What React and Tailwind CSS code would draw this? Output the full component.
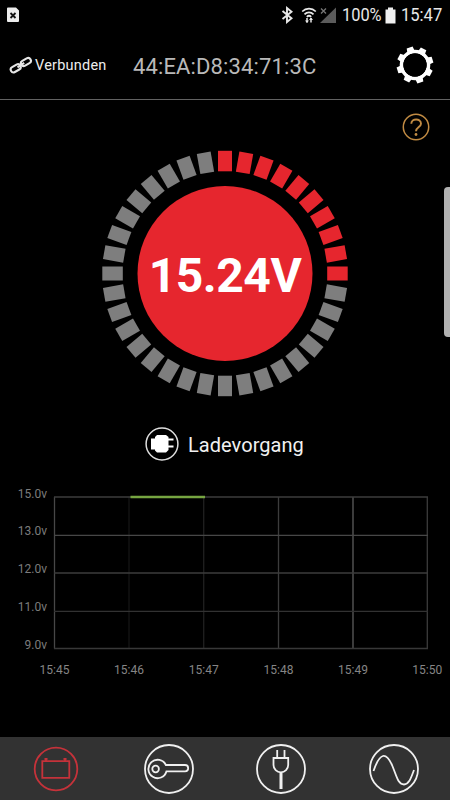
import React, { useState } from 'react'

const SEGMENTS = 36
const ACTIVE_SEGMENTS = 10

const voltLabels = [
  { text: '15.0v', y: 497.5 },
  { text: '13.0v', y: 535.3 },
  { text: '12.0v', y: 573.2 },
  { text: '11.0v', y: 611 },
  { text: '9.0v', y: 648.8 },
]

const rows = [
  { y: 497, color: '#3c3c3c' },
  { y: 535.4, color: '#474747' },
  { y: 573, color: '#3c3c3c' },
  { y: 611.3, color: '#323232' },
  { y: 648.5, color: '#383838' },
]

const columns = [
  { text: '15:45', x: 54.5, color: '#474747' },
  { text: '15:46', x: 129, color: '#151515' },
  { text: '15:47', x: 203.7, color: '#202020' },
  { text: '15:48', x: 278.5, color: '#3c3c3c' },
  { text: '15:49', x: 353, color: '#5c5c5c' },
  { text: '15:50', x: 427.3, color: '#3c3c3c' },
]

const StatusBar = () => (
  <div className="flex h-[30px] shrink-0 items-center text-[#e8e8e8]">
    <svg className="ml-[7px] h-4 w-3" viewBox="0 0 12 16">
      <path d="M1 .5h8l3 3V14a1 1 0 0 1-1 1H1a1 1 0 0 1-1-1V1.500a1 1 0 0 1 1-1z" fill="#ececec" />
      <path d="M3.500 6l5 5m0-5l-5 5" stroke="#111" strokeWidth="1.800" />
    </svg>
    <svg className="ml-[262px] h-[18px] w-[14px]" viewBox="0 0 14 18" fill="none" stroke="currentColor" strokeWidth="1.900">
      <path d="M1.500 5l9 7.300L6 16V2l4.500 3.700L1.500 13" />
    </svg>
    <svg className="ml-[6px] h-[18px] w-[16px]" viewBox="0 0 16 18" fill="none" stroke="currentColor" strokeWidth="1.700">
      <path d="M1.200 5.500a9.700 9.700 0 0 1 13.600 0M3.500 8.300a6.400 6.400 0 0 1 9 0M5.800 10.800a3.200 3.200 0 0 1 4.400 0" />
      <path d="M6 12v4.500M10 12v4.500" strokeWidth="1.500" />
      <path d="M4 14.500h4l-2 2.500zM8 14h4l-2-2.500z" fill="currentColor" stroke="none" />
    </svg>
    <svg className="ml-[3px] h-[18px] w-[17px]" viewBox="0 0 17 18">
      <path d="M16 1.500v15.500H0z" fill="#5b5b5b" />
      <path d="M1 2.500l5 5m0-5l-5 5" stroke="#777" strokeWidth="1.300" />
    </svg>
    <div className="ml-[5px] w-[40px]">
      <span className="inline-block origin-left scale-x-[0.91] text-[18px] leading-[30px]">100%</span>
    </div>
    <svg className="ml-[3px] h-[17px] w-[11px]" viewBox="0 0 11 17" fill="#f0f0f0">
      <path d="M3 .5h5v2h2.500v14H.5v-14H3z" />
    </svg>
    <div className="ml-[5px] w-[42px]">
      <span className="inline-block origin-left scale-x-[0.92] text-[18px] leading-[30px]">15:47</span>
    </div>
  </div>
)

const Header = () => (
  <header className="flex h-[70px] shrink-0 items-center border-b border-[#626262]">
    <svg className="ml-[9px] h-[18px] w-[24px]" viewBox="0 0 24 18" fill="none" stroke="#e6e6e6" strokeWidth="2.100">
      <rect x="-5.300" y="-2.800" width="10.600" height="5.600" rx="2.800" transform="translate(6.700 12.300) rotate(-30)" />
      <rect x="-5.300" y="-2.800" width="10.600" height="5.600" rx="2.800" transform="translate(16.900 6) rotate(-30)" />
      <path d="M8.500 11.300l6.700-4.400" />
    </svg>
    <div className="ml-[2px] w-[98px] pt-[2px] text-[14.500px] tracking-[0.220px] text-[#ededed]">Verbunden</div>
    <div className="w-[263px] pt-[4px] text-[22px] tracking-[0.130px] text-[#b9b9b9]">44:EA:D8:34:71:3C</div>
    <svg className="h-[38px] w-[38px]" viewBox="-19 -19 38 38">
      <g fill="#fff">
        {Array.from({ length: 8 }, (_, i) => (
          <path key={i} d="M-4-12l.9-6.300h6.200l.9 6.300z" transform={`rotate(${i * 45 + 28})`} />
        ))}
      </g>
      <circle r="13.500" fill="none" stroke="#fff" strokeWidth="3.600" />
      <circle r="11.600" fill="#000" />
    </svg>
  </header>
)

const Gauge = () => (
  <div className="grid h-[248px] w-[248px] place-items-center">
    <svg className="col-start-1 row-start-1 h-[248px] w-[248px]" viewBox="-124 -123.500 248 248">
      {Array.from({ length: SEGMENTS }, (_, i) => (
        <rect
          key={i}
          x="-7"
          y="-122.700"
          width="14"
          height="20.500"
          fill={i < ACTIVE_SEGMENTS ? '#e6262e' : '#7e7e7e'}
          transform={`rotate(${i * (360 / SEGMENTS)})`}
        />
      ))}
      <circle r="87.500" fill="#e6262e" />
    </svg>
    <span className="col-start-1 row-start-1 pt-[3px] text-[48px] leading-none font-bold tracking-[-0.450px] text-white">15.24V</span>
  </div>
)

const VoltageChart = () => (
  <svg className="h-[200px] w-[450px] shrink-0" viewBox="0 485 450 200">
    {columns.map((c) => (
      <g key={c.text}>
        <path d={`M${c.x} 497V648.500`} stroke={c.color} strokeWidth="1.300" />
        <text x={c.x} y="674" fontSize="12" fill="#858585" textAnchor="middle">{c.text}</text>
      </g>
    ))}
    {rows.map((r) => (
      <path key={r.y} d={`M54 ${r.y}H428`} stroke={r.color} strokeWidth="1.300" />
    ))}
    {voltLabels.map((l) => (
      <text key={l.text} x="47" y={l.y} fontSize="12" fill="#7c7c7c" textAnchor="end">{l.text}</text>
    ))}
    <path d="M130.500 497H205" stroke="#76a541" strokeWidth="2.600" />
  </svg>
)

const tabs = [
  {
    id: 'battery',
    r: 21.3,
    icon: <path d="M-13.700-7.800h27v16.600h-27zM-11.500-10h3M7.500-10h3M-10-10v2.500M9-10v2.500" />,
  },
  {
    id: 'ignition',
    r: 24,
    icon: (
      <>
        <path d="M-3.100-4H16a3.150 3.150 0 0 1 0 6.300H-2.500A9.200 9.200 0 1 1-3.100-4z" />
        <circle cx="-13.400" cy="0" r="3.300" />
      </>
    ),
  },
  {
    id: 'charging',
    r: 24,
    icon: (
      <>
        <path d="M-3.800-19v8M3.500-19v8M-7.500-11H7.200V-4a7.350 7.350 0 0 1-14.700 0z" />
        <path d="M0 4V20" strokeWidth="3" />
      </>
    ),
  },
  {
    id: 'wave',
    r: 24,
    icon: <path d="M-20.500 2C-14-17-8-17-2-4C3 8 4 15.500 10 15.500C15 15.500 17 9 20 1" />,
  },
]

const App = () => {
  const [active, setActive] = useState('battery')

  return (
    <div className="relative flex h-[800px] w-[450px] flex-col overflow-hidden bg-black font-['Roboto',sans-serif]">
      <StatusBar />
      <Header />

      <div className="flex h-[50px] shrink-0 justify-end pt-[13px] pr-[20px]">
        <svg className="h-7 w-7" viewBox="-14 -14 28 28" fill="none" stroke="#c18b43" strokeWidth="1.500">
          <circle r="12.700" />
          <path d="M-4.700-3.200C-4.700-9 5-9 5-3.300C5 0 0 0 0 4.300" strokeWidth="1.900" />
          <circle cy="7.500" r="1.400" fill="#c18b43" stroke="none" />
        </svg>
      </div>

      <div className="flex h-[248px] shrink-0 justify-center">
        <Gauge />
      </div>

      <div className="mt-[26px] flex h-[40px] shrink-0 items-center pl-[145px]">
        <svg className="h-[34px] w-[34px]" viewBox="-17 -17 34 34">
          <circle r="15.900" fill="none" stroke="#dedede" strokeWidth="1.500" />
          <path d="M-11-5.500h4V-7l2-2H4l2.500 2v1.500H11.500v2H6.500v5H11.500v2H6.500V6L4 8.500h-9L-7 6.500V5.500h-4z" fill="#fff" />
        </svg>
        <span className="ml-[9px] pt-px text-[20px] tracking-[0.050px] text-[#f1f1f1]">Ladevorgang</span>
      </div>

      <div className="mt-[21px]">
        <VoltageChart />
      </div>

      <nav className="mt-auto flex h-[63px] shrink-0 items-center bg-[#323232]">
        {tabs.map((tab) => (
          <button
            key={tab.id}
            aria-label={tab.id}
            onClick={() => setActive(tab.id)}
            className={`flex flex-1 items-center justify-center ${active === tab.id ? 'text-[#c5323a]' : 'text-[#f0f0f0]'}`}
          >
            <svg className="h-[52px] w-[52px]" viewBox="-26 -26 52 52" fill="none" stroke="currentColor" strokeWidth="1.800">
              <circle r={tab.r} />
              {tab.icon}
            </svg>
          </button>
        ))}
      </nav>

      {/* edge panel handle */}
      <div className="absolute top-[187px] right-0 h-[150px] w-[6px] rounded-l-[4px] bg-[#b1b1b1]"></div>
    </div>
  )
}

export default App
